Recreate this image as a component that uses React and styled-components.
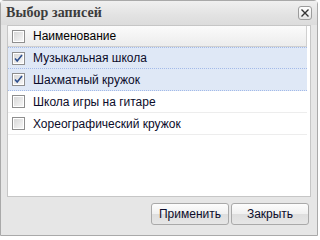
import React from "react";
import styled, { createGlobalStyle } from "styled-components";

const Global = createGlobalStyle`
  html, body {
    margin: 0;
    padding: 0;
    background: #ffffff;
  }
`;

const Window = styled.div`
  box-sizing: border-box;
  width: 318px;
  height: 236px;
  display: flex;
  flex-direction: column;
  background: #e6e6e6;
  border: 1px solid #a9a9a9;
  border-radius: 4px 4px 0 0;
  font-family: "Liberation Sans", Arial, sans-serif;
`;

const TitleBar = styled.div`
  height: 24px;
  display: flex;
  align-items: center;
  justify-content: space-between;
  padding: 0 5px 0 5px;
  background: linear-gradient(#f0f0f0, #e2e2e2 60%, #dcdcdc);
`;

const Title = styled.div`
  font-family: "Liberation Serif", "Times New Roman", serif;
  font-weight: bold;
  font-size: 14px;
  color: #3c3c3c;
  letter-spacing: 0.1px;
`;

const CloseButton = styled.div`
  box-sizing: border-box;
  width: 14px;
  height: 14px;
  margin-top: -1px;
  border: 1px solid #9c9c9c;
  border-radius: 3px;
  background: linear-gradient(#ffffff, #e4e4e4);
  display: flex;
  align-items: center;
  justify-content: center;
`;

const Body = styled.div`
  flex: 1;
  display: flex;
  flex-direction: column;
  padding: 0 6px 0 6px;
`;

const Grid = styled.div`
  box-sizing: border-box;
  height: 172px;
  background: #ffffff;
  border: 1px solid #c6c6c6;
`;

const HeaderRow = styled.div`
  height: 20px;
  display: flex;
  align-items: center;
  padding-left: 4px;
  background: linear-gradient(#fbfbfb, #ececec);
  border-bottom: 1px solid #cfcfcf;
  border-right: 1px solid #d0d0d0;
  margin-right: 3px;
`;

const Row = styled.div`
  box-sizing: border-box;
  height: 22px;
  display: flex;
  align-items: center;
  padding-left: 4px;
  margin-right: 3px;
  background: ${(p) => (p.selected ? "#dfe8f6" : "#ffffff")};
  border-bottom: ${(p) =>
    p.selected ? "1px dotted #a3bae9" : "1px solid #ededed"};
  border-top: ${(p) => (p.first ? "1px dotted #a3bae9" : "none")};
`;

const Label = styled.span`
  margin-left: 8px;
  font-size: 12px;
  color: ${(p) => (p.header ? "#000000" : "#0c0c2a")};
`;

const Footer = styled.div`
  flex: 1;
  display: flex;
  justify-content: flex-end;
  align-items: flex-start;
  gap: 2px;
  padding: 6px 2px 0 0;
`;

const Button = styled.button`
  box-sizing: border-box;
  width: 78px;
  height: 22px;
  padding: 0;
  border: 1px solid #a9a9a9;
  border-radius: 3px;
  background: linear-gradient(#fdfdfd, #f0f0f0 50%, #dedede 52%, #e6e6e6);
  font-family: "Liberation Sans", Arial, sans-serif;
  font-size: 12px;
  color: #0c0c2a;
`;

const Check = ({ checked }) => (
  <svg width="13" height="13" viewBox="0 0 13 13">
    <defs>
      <linearGradient id="cb" x1="0" y1="0" x2="1" y2="1">
        <stop offset="0" stopColor="#d8d8d8" />
        <stop offset="1" stopColor="#f6f6f6" />
      </linearGradient>
    </defs>
    <rect x="0.5" y="0.5" width="12" height="12" fill="#ffffff" stroke="#8e8e8e" />
    <rect x="2" y="2" width="9" height="9" fill="url(#cb)" />
    {checked && (
      <path
        d="M3 6.5 L5.2 9 L10 3"
        fill="none"
        stroke="#2d4f8e"
        strokeWidth="1.6"
      />
    )}
  </svg>
);

const rows = [
  { name: "Музыкальная школа", checked: true },
  { name: "Шахматный кружок", checked: true },
  { name: "Школа игры на гитаре", checked: false },
  { name: "Хореографический кружок", checked: false },
];

export default function App() {
  return (
    <>
      <Global />
      <Window>
        <TitleBar>
          <Title>Выбор записей</Title>
          <CloseButton>
            <svg width="10" height="10" viewBox="0 0 10 10">
              <path d="M1.5 1.5 L8.5 8.5 M8.5 1.5 L1.5 8.5" stroke="#333" strokeWidth="1.4" />
            </svg>
          </CloseButton>
        </TitleBar>
        <Body>
          <Grid>
            <HeaderRow>
              <Check />
              <Label header>Наименование</Label>
            </HeaderRow>
            {rows.map((r, i) => (
              <Row key={r.name} selected={r.checked} first={i === 0}>
                <Check checked={r.checked} />
                <Label>{r.name}</Label>
              </Row>
            ))}
          </Grid>
          <Footer>
            <Button>Применить</Button>
            <Button>Закрыть</Button>
          </Footer>
        </Body>
      </Window>
    </>
  );
}
